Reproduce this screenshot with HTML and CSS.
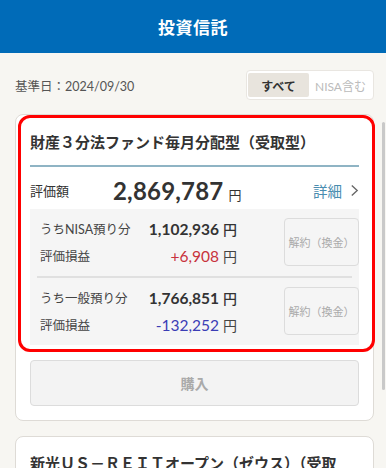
FILE: index.html
```html
<!DOCTYPE html>
<html lang="ja">
<head>
<meta charset="utf-8">
<title>投資信託</title>
<link rel="stylesheet" href="styles.css">
</head>
<body>
<header class="app-header">投資信託</header>
<div class="date-row">
  <span class="base-date">基準日：2024/09/30</span>
  <div class="toggle">
    <span class="toggle-item active">すべて</span>
    <span class="toggle-item">NISA含む</span>
  </div>
</div>

<section class="card">
  <div class="highlight"></div>
  <h2 class="fund-title">財産３分法ファンド毎月分配型（受取型）</h2>
  <div class="total-row">
    <span class="total-label">評価額</span>
    <span class="total-value">2,869,787<span class="yen">円</span></span>
    <span class="detail-link">詳細<svg class="chev" viewBox="0 0 10 14" width="9" height="13"><path d="M2 1.5 L8 7 L2 12.5" fill="none" stroke="#666" stroke-width="1.5"/></svg></span>
  </div>
  <div class="panel">
    <div class="hold-row">
      <div class="hold-grid">
        <span class="hold-label">うちNISA預り分</span>
        <span class="hold-amount">1,102,936<span class="yen-s">円</span></span>
        <span class="hold-label">評価損益</span>
        <span class="hold-pl plus">+6,908<span class="yen-s">円</span></span>
      </div>
      <button class="cancel-btn">解約（換金）</button>
    </div>
    <div class="panel-divider"></div>
    <div class="hold-row">
      <div class="hold-grid">
        <span class="hold-label">うち一般預り分</span>
        <span class="hold-amount">1,766,851<span class="yen-s">円</span></span>
        <span class="hold-label">評価損益</span>
        <span class="hold-pl minus">-132,252<span class="yen-s">円</span></span>
      </div>
      <button class="cancel-btn">解約（換金）</button>
    </div>
  </div>
  <button class="buy-btn">購入</button>
</section>

<section class="card card-next">
  <h2 class="fund-title fund-title-wrap">新光ＵＳ－ＲＥＩＴオープン（ゼウス）（受取型）</h2>
</section>

<div class="scroll-thumb"></div>
</body>
</html>
```
FILE: styles.css
```css
html, body {
  margin: 0;
  padding: 0;
}
body {
  width: 386px;
  height: 468px;
  overflow: hidden;
  background: #f7f6f2;
  font-family: "Lato", "Noto Sans CJK JP", sans-serif;
  color: #333;
  position: relative;
}
.app-header {
  height: 53px;
  background: #006bb8;
  color: #fff;
  font-size: 17px;
  font-weight: 700;
  display: flex;
  align-items: center;
  justify-content: center;
  letter-spacing: 0.5px;
}
.date-row {
  display: flex;
  justify-content: space-between;
  align-items: center;
  margin: 17px 12px 14px 15px;
  height: 30px;
}
.base-date {
  font-size: 12.5px;
  color: #555;
}
.toggle {
  display: flex;
  border: 1px solid #e9e6e1;
  border-radius: 4px;
  background: #fff;
  padding: 2px 1px;
  height: 30px;
  box-sizing: border-box;
}
.toggle-item {
  display: flex;
  align-items: center;
  justify-content: center;
  font-size: 12px;
  color: #bbb;
  width: 63px;
}
.toggle-item.active {
  background: #e8e4dd;
  color: #333;
  font-weight: 700;
  width: 61px;
  border-radius: 2px;
}
.card {
  position: relative;
  margin: 0 12px 0 15px;
  background: #fff;
  border: 1px solid #dedbd6;
  border-radius: 8px;
  padding: 0 14px 14px;
}
.highlight {
  position: absolute;
  left: 2px;
  top: 0;
  width: 357px;
  height: 237px;
  box-sizing: border-box;
  border: 3.5px solid #ff0000;
  border-radius: 12px;
  pointer-events: none;
}
.fund-title {
  margin: 0;
  padding: 16px 0 12px;
  font-size: 15px;
  line-height: 22px;
  font-weight: 700;
  color: #333;
  border-bottom: 2px solid #8fb4c4;
  white-space: nowrap;
  overflow: hidden;
}
.fund-title-wrap {
  white-space: normal;
  border-bottom: none;
  padding-top: 15px;
}
.total-row {
  display: flex;
  align-items: center;
  height: 42px;
  padding-top: 4px;
  box-sizing: border-box;
}
.total-label {
  font-size: 13px;
  width: 83px;
  color: #333;
}
.total-value {
  font-size: 24px;
  font-weight: 700;
  color: #333;
  letter-spacing: 0.2px;
}
.yen {
  font-size: 13px;
  font-weight: 400;
  margin-left: 5px;
}
.detail-link {
  margin-left: auto;
  font-size: 14.5px;
  color: #4a8db0;
  display: flex;
  align-items: center;
  gap: 8px;
}
.panel {
  background: #f5f5f5;
}
.hold-row {
  display: flex;
  align-items: center;
  padding: 6px 0 7px 10px;
}
.hold-grid {
  display: grid;
  grid-template-columns: 100px 97px;
  grid-auto-rows: 27px;
  align-items: center;
}
.hold-label {
  font-size: 12.5px;
  color: #444;
}
.hold-amount {
  text-align: right;
  font-size: 15.5px;
  font-weight: 700;
  color: #333;
}
.hold-pl {
  text-align: right;
  font-size: 15.5px;
}
.hold-pl.plus { color: #c8323c; }
.hold-pl.minus { color: #3b3db5; }
.yen-s {
  font-size: 14px;
  font-weight: 400;
  color: #444;
  margin-left: 4px;
}
.hold-amount .yen-s { font-weight: 500; color: #333; }
.cancel-btn {
  margin-left: auto;
  width: 75px;
  height: 48px;
  border: 1px solid #dcdcdc;
  border-radius: 4px;
  background: #f5f5f5;
  color: #aaa;
  font-family: inherit;
  font-size: 11px;
  padding: 0;
}
.panel-divider {
  height: 2px;
  background: #e0e0e0;
  margin: 0 7px;
}
.buy-btn {
  display: block;
  width: 100%;
  margin-top: 15px;
  height: 46px;
  border: 1px solid #dcdcdc;
  border-radius: 4px;
  background: #f3f3f3;
  color: #aaa;
  font-family: inherit;
  font-size: 14px;
  font-weight: 700;
}
.card-next {
  margin-top: 15px;
}
.scroll-thumb {
  position: absolute;
  left: 382px;
  top: 122px;
  width: 3px;
  height: 268px;
  background: #c9c9c9;
  border-radius: 2px;
}
```
